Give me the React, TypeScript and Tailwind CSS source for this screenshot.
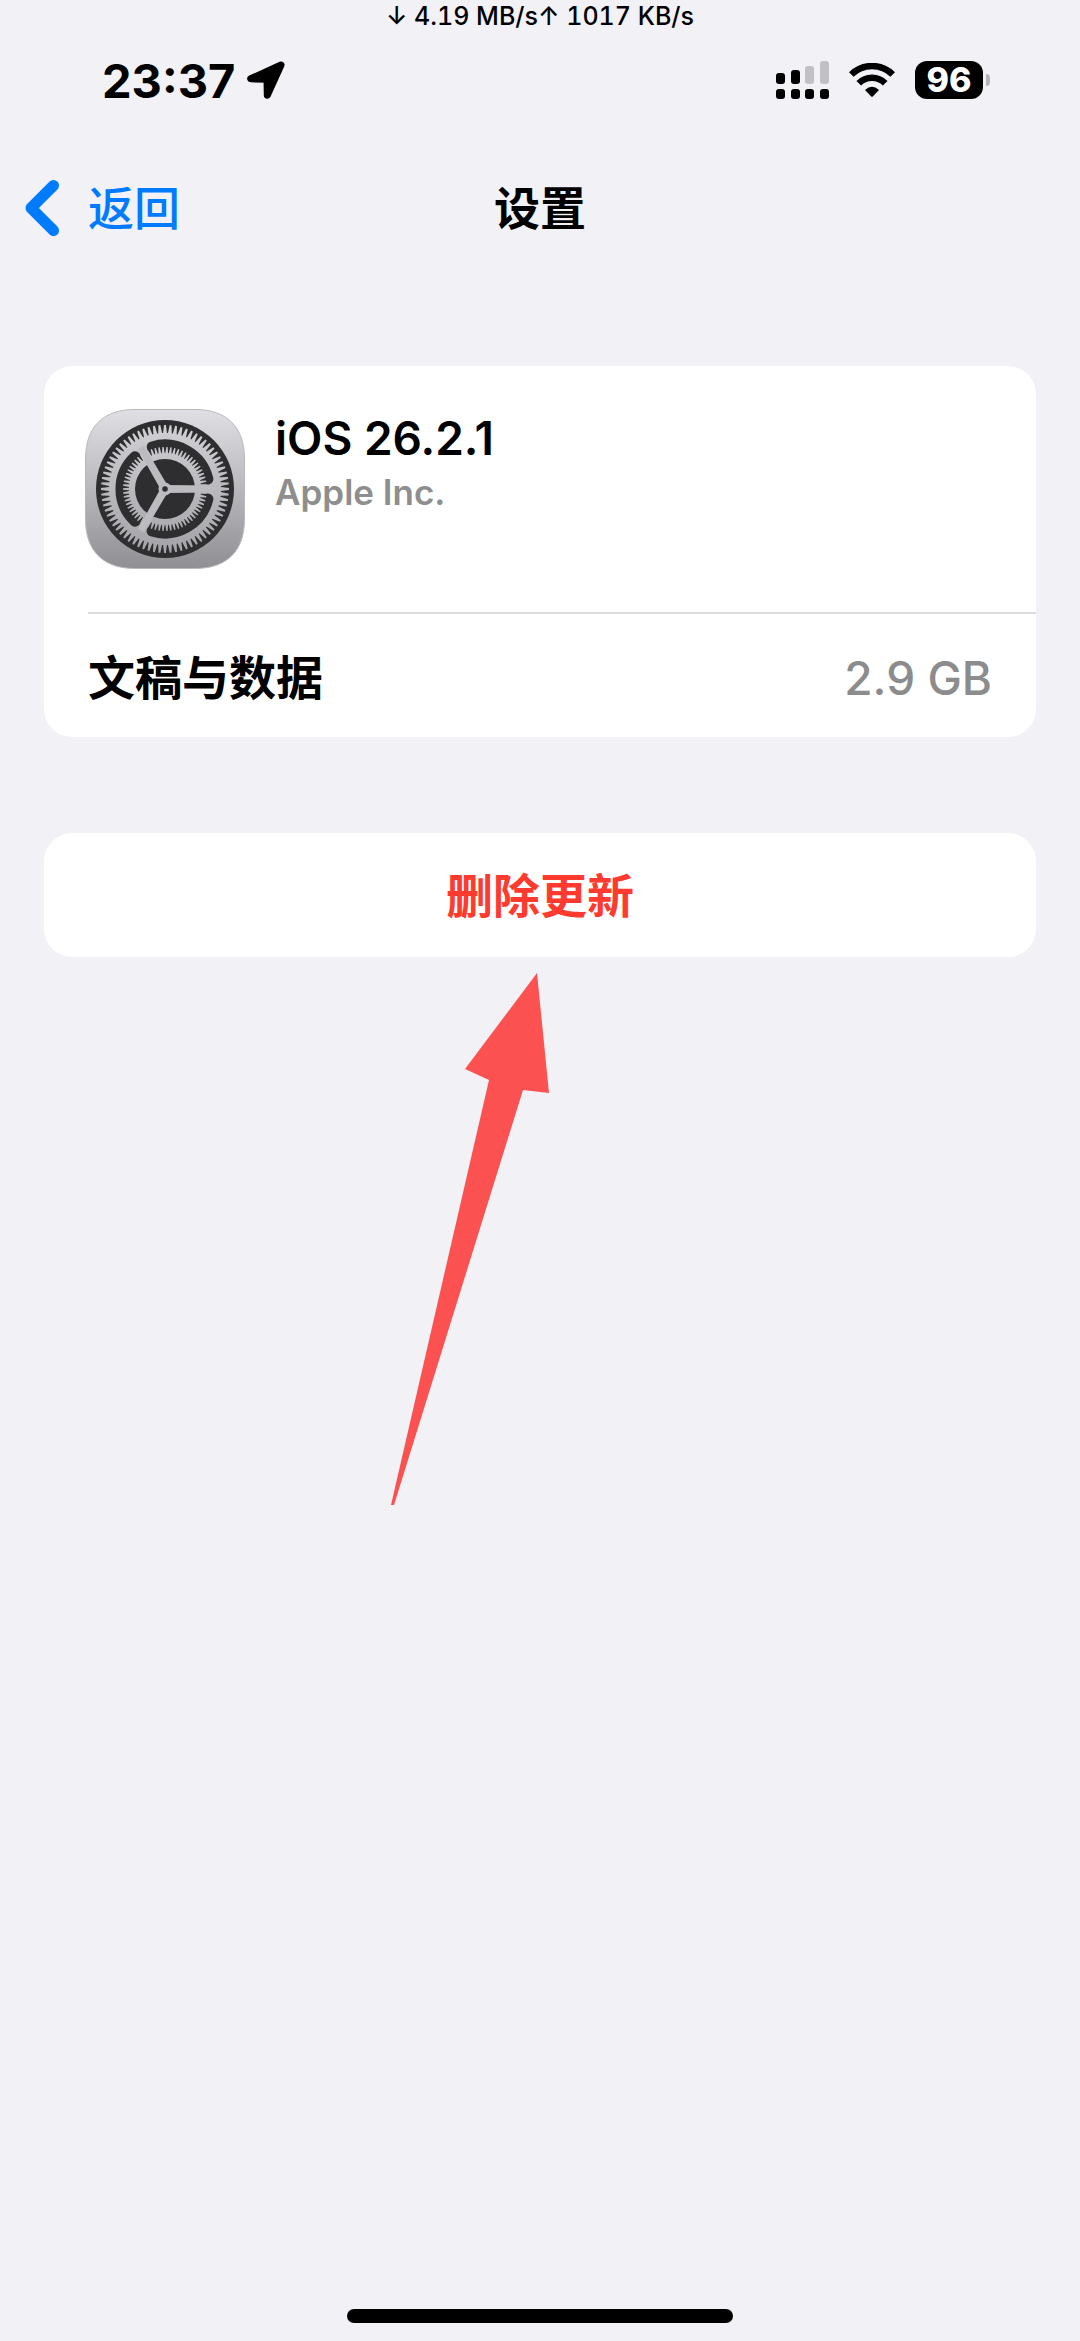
const CENTER = 80;

function polar(radius: number, degrees: number): string {
  const a = (degrees * Math.PI) / 180;
  return `${(CENTER + radius * Math.cos(a)).toFixed(2)} ${(CENTER + radius * Math.sin(a)).toFixed(2)}`;
}

/** Outline of a gear with narrow teeth between a root and a tip radius. */
function gearPath(teeth: number, root: number, tip: number): string {
  const step = 360 / teeth;
  const points: string[] = [];
  for (let i = 0; i < teeth; i++) {
    const a = i * step;
    points.push(
      polar(root, a - step * 0.4),
      polar(tip, a - step * 0.16),
      polar(tip, a + step * 0.16),
      polar(root, a + step * 0.4),
    );
  }
  return `M${points.join("L")}Z`;
}

/** One of the three slots between the outer ring and the inner gear. */
function slotPath(start: number): string {
  return [
    `M${polar(44, start + 13)}`,
    `A44 44 0 0 1 ${polar(44, start + 107)}`,
    `L${polar(37, start + 105)}`,
    `A37 37 0 0 0 ${polar(37, start + 15)}Z`,
  ].join("");
}

function SettingsIcon() {
  return (
    <svg viewBox="0 0 160 160" className="size-40 shrink-0" role="img" aria-label="设置">
      <defs>
        <linearGradient id="plate" x1="0" y1="0" x2="0" y2="1">
          <stop offset="0" stopColor="#dfdfe4" />
          <stop offset="1" stopColor="#8f8f94" />
        </linearGradient>
        <linearGradient id="metal" gradientUnits="userSpaceOnUse" x1="0" y1="12" x2="0" y2="148">
          <stop offset="0" stopColor="#d2d2d6" />
          <stop offset="1" stopColor="#a2a2a6" />
        </linearGradient>
      </defs>
      <path
        d="M50 0.5H110C142 0.5 159.500 18 159.500 50V110C159.500 142 142 159.500 110 159.500H50C18 159.500 0.500 142 0.500 110V50C0.500 18 18 0.500 50 0.500Z"
        fill="url(#plate)"
        stroke="#b9b9bd"
        strokeWidth="1"
      />
      <circle cx="80" cy="80" r="69" fill="#2e2e30" />
      <path d={gearPath(72, 56, 64)} fill="url(#metal)" />
      {[0, 120, 240].map((a) => (
        <path key={a} d={slotPath(a)} fill="#2e2e30" stroke="#2e2e30" strokeWidth="11" strokeLinejoin="round" />
      ))}
      <path d={gearPath(66, 36, 42)} fill="url(#metal)" />
      <circle cx="80" cy="80" r="30" fill="#2e2e30" />
      {[0, 120, 240].map((a) => (
        <path key={a} d="M80 76L128 76.500V83.500L80 84Z" fill="#bcbcc0" transform={`rotate(${a} 80 80)`} />
      ))}
      <circle cx="80" cy="80" r="6.500" fill="#bcbcc0" />
      <circle cx="80" cy="80" r="2.800" fill="#2e2e30" />
    </svg>
  );
}

function LocationArrow() {
  return (
    <svg viewBox="0 0 38 38" className="size-[38px]" aria-hidden="true">
      <path d="M34 4L3.700 17.800L20 18.300L20.300 34.300Z" fill="#000" stroke="#000" strokeWidth="7" strokeLinejoin="round" />
    </svg>
  );
}

function SignalIcon() {
  const columns = [
    { x: 0, y: 12, color: "#000" },
    { x: 15, y: 9, color: "#000" },
    { x: 29, y: 5, color: "#c1c1c5" },
    { x: 44, y: 0, color: "#c1c1c5" },
  ];
  return (
    <svg viewBox="0 0 53 38" className="h-[38px] w-[53px]" aria-hidden="true">
      {columns.map((c) => (
        <g key={c.x}>
          <rect x={c.x} y={c.y} width="9" height={23 - c.y} rx="3" fill={c.color} />
          <rect x={c.x} y="28" width="9" height="10" rx="3" fill="#000" />
        </g>
      ))}
    </svg>
  );
}

function WifiIcon() {
  return (
    <svg viewBox="0 0 46 34" className="h-[34px] w-[46px]" aria-hidden="true">
      <g fill="none" stroke="#000">
        <path d="M2.300 11.500A29.500 29.500 0 0 1 43.700 11.500" strokeWidth="6.500" />
        <path d="M9.800 20.300A18.500 18.500 0 0 1 36.200 20.300" strokeWidth="6.500" />
      </g>
      <path d="M16 27Q23 20.500 30 27L24 33.200Q23 34.200 22 33.200Z" fill="#000" />
    </svg>
  );
}

function Battery() {
  return (
    <div className="flex items-center gap-[3px]">
      <div className="flex h-[38px] w-[68px] items-center justify-center rounded-xl bg-black text-[34px] leading-none font-extrabold text-white">
        96
      </div>
      <div className="h-3 w-1 rounded-r-full bg-[#b4b4b8]" />
    </div>
  );
}

export default function App() {
  return (
    <div
      className="flex min-h-screen flex-col bg-[#f1f1f6] font-['Inter','Noto_Sans_CJK_SC',sans-serif] text-black"
      lang="zh-CN"
    >
      <div className="flex h-8 items-center justify-center text-[25px] leading-none font-medium tabular-nums">
        ↓ 4.19 MB/s↑ 1017 KB/s
      </div>

      <div className="flex h-24 items-center justify-between pr-[90px] pl-[102px]">
        <div className="flex items-center gap-3">
          <span className="text-[47px] leading-none font-bold">23:37</span>
          <LocationArrow />
        </div>
        <div className="flex items-center gap-5">
          <SignalIcon />
          <WifiIcon />
          <Battery />
        </div>
      </div>

      <header className="grid h-40 grid-cols-[1fr_auto_1fr] items-center px-[25px]">
        <button
          type="button"
          className="flex items-center gap-[29px] justify-self-start text-[46px] leading-none font-medium text-[#007aff]"
        >
          <svg viewBox="0 0 34 56" className="h-14 w-[34px]" aria-hidden="true">
            <path
              d="M28.500 5.500L6 28L28.500 50.500"
              fill="none"
              stroke="currentColor"
              strokeWidth="11"
              strokeLinecap="round"
              strokeLinejoin="round"
            />
          </svg>
          返回
        </button>
        <h1 className="text-[46px] leading-none font-bold">设置</h1>
      </header>

      <main className="mt-[78px] flex flex-col gap-24 px-11">
        <section className="overflow-hidden rounded-[28px] bg-white">
          <div className="flex gap-[30px] px-[41px] py-[43px]">
            <SettingsIcon />
            <div>
              <h2 className="text-[46px] leading-[58px] font-semibold">iOS 26.2.1</h2>
              <p className="text-[35px] leading-[50px] font-semibold text-[#8e8e8e]">Apple Inc.</p>
            </div>
          </div>
          <dl className="ml-11 flex h-[125px] items-center justify-between border-t-2 border-[#dcdcde] pt-1 pr-11">
            <dt className="text-[47px] leading-none font-bold">文稿与数据</dt>
            <dd className="text-[46px] leading-none font-medium text-[#8c8c8c]">2.9 GB</dd>
          </dl>
        </section>

        <div className="relative">
          <button
            type="button"
            className="flex h-[124px] w-full items-center justify-center rounded-[28px] bg-white text-[47px] leading-none font-bold text-[#ff3b30]"
          >
            删除更新
          </button>
          <svg
            viewBox="0 0 160 533"
            className="pointer-events-none absolute top-full left-1/2 mt-4 -ml-[150px] h-[533px] w-40"
            aria-hidden="true"
          >
            <path d="M147 0L159 120L133 117L4 532L1 532L99 107L75 96Z" fill="#fb5151" />
          </svg>
        </div>
      </main>

      <div className="mx-auto mt-auto mb-[18px] h-3.5 w-[386px] rounded-full bg-black" />
    </div>
  );
}
